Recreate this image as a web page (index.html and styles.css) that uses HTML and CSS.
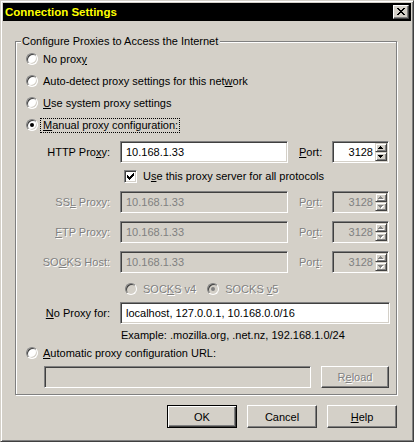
FILE: index.html
```html
<!DOCTYPE html>
<html lang="en">
<head>
<meta charset="utf-8">
<title>Connection Settings</title>
<link rel="stylesheet" href="styles.css">
</head>
<body>
<div class="window">
  <div class="caption">
    <span class="caption-title">Connection Settings</span>
    <span class="caption-close">
      <svg width="8" height="7" viewBox="0 0 8 7" shape-rendering="crispEdges">
        <path fill="#000" d="M0 0h2v1H0zM6 0h2v1H6zM1 1h2v1H1zM5 1h2v1H5zM2 2h4v1H2zM3 3h2v1H3zM2 4h4v1H2zM1 5h2v1H1zM5 5h2v1H5zM0 6h2v1H0zM6 6h2v1H6z"/>
      </svg>
    </span>
  </div>

  <div class="client">
    <div class="group">
      <div class="legend">Configure Proxies to Access the Internet</div>

      <div class="radio-row"><span class="radio"></span><span>No prox<u>y</u></span></div>
      <div class="radio-row"><span class="radio"></span><span>Auto-detect proxy settings for this net<u>w</u>ork</span></div>
      <div class="radio-row"><span class="radio"></span><span><u>U</u>se system proxy settings</span></div>
      <div class="radio-row"><span class="radio checked"></span><span class="focus"><u>M</u>anual proxy configuration:</span></div>

      <div class="field-row row-http">
        <span class="field-label">HTTP Pro<u>x</u>y:</span>
        <span class="field host">10.168.1.33</span>
        <span class="port-label"><u>P</u>ort:</span>
        <span class="field spin">
          <span class="spin-value">3128</span>
          <span class="spin-buttons">
            <span class="spin-btn"><svg width="5" height="3" viewBox="0 0 5 3" shape-rendering="crispEdges"><path d="M2 0h1v1H2zM1 1h3v1H1zM0 2h5v1H0z"/></svg></span>
            <span class="spin-btn"><svg width="5" height="3" viewBox="0 0 5 3" shape-rendering="crispEdges"><path d="M0 0h5v1H0zM1 1h3v1H1zM2 2h1v1H2z"/></svg></span>
          </span>
        </span>
      </div>

      <div class="check-row">
        <span class="checkbox">
          <svg width="7" height="7" viewBox="0 0 7 7" shape-rendering="crispEdges">
            <path fill="#000" d="M6 0h1v1H6zM5 1h2v1H5zM0 2h1v1H0zM4 2h3v1H4zM0 3h2v1H0zM3 3h3v1H3zM0 4h5v1H0zM1 5h3v1H1zM2 6h1v1H2z"/>
          </svg>
        </span>
        <span>U<u>s</u>e this proxy server for all protocols</span>
      </div>

      <div class="field-row row-ssl disabled">
        <span class="field-label">SS<u>L</u> Proxy:</span>
        <span class="field host">10.168.1.33</span>
        <span class="port-label">P<u>o</u>rt:</span>
        <span class="field spin">
          <span class="spin-value">3128</span>
          <span class="spin-buttons">
            <span class="spin-btn"><svg width="5" height="3" viewBox="0 0 5 3" shape-rendering="crispEdges"><path d="M2 0h1v1H2zM1 1h3v1H1zM0 2h5v1H0z"/></svg></span>
            <span class="spin-btn"><svg width="5" height="3" viewBox="0 0 5 3" shape-rendering="crispEdges"><path d="M0 0h5v1H0zM1 1h3v1H1zM2 2h1v1H2z"/></svg></span>
          </span>
        </span>
      </div>

      <div class="field-row row-next disabled">
        <span class="field-label"><u>F</u>TP Proxy:</span>
        <span class="field host">10.168.1.33</span>
        <span class="port-label">Po<u>r</u>t:</span>
        <span class="field spin">
          <span class="spin-value">3128</span>
          <span class="spin-buttons">
            <span class="spin-btn"><svg width="5" height="3" viewBox="0 0 5 3" shape-rendering="crispEdges"><path d="M2 0h1v1H2zM1 1h3v1H1zM0 2h5v1H0z"/></svg></span>
            <span class="spin-btn"><svg width="5" height="3" viewBox="0 0 5 3" shape-rendering="crispEdges"><path d="M0 0h5v1H0zM1 1h3v1H1zM2 2h1v1H2z"/></svg></span>
          </span>
        </span>
      </div>

      <div class="field-row row-next disabled">
        <span class="field-label">SO<u>C</u>KS Host:</span>
        <span class="field host">10.168.1.33</span>
        <span class="port-label">Por<u>t</u>:</span>
        <span class="field spin">
          <span class="spin-value">3128</span>
          <span class="spin-buttons">
            <span class="spin-btn"><svg width="5" height="3" viewBox="0 0 5 3" shape-rendering="crispEdges"><path d="M2 0h1v1H2zM1 1h3v1H1zM0 2h5v1H0z"/></svg></span>
            <span class="spin-btn"><svg width="5" height="3" viewBox="0 0 5 3" shape-rendering="crispEdges"><path d="M0 0h5v1H0zM1 1h3v1H1zM2 2h1v1H2z"/></svg></span>
          </span>
        </span>
      </div>

      <div class="socks-row disabled">
        <span class="radio"></span><span class="socks-text">SOC<u>K</u>S v4</span>
        <span class="radio checked socks-second"></span><span class="socks-text">SOCKS <u>v</u>5</span>
      </div>

      <div class="field-row row-noproxy">
        <span class="field-label"><u>N</u>o Proxy for:</span>
        <span class="field noproxy">localhost, 127.0.0.1, 10.168.0.0/16</span>
      </div>

      <div class="example">Example: .mozilla.org, .net.nz, 192.168.1.0/24</div>

      <div class="radio-row auto-row"><span class="radio"></span><span><u>A</u>utomatic proxy configuration URL:</span></div>

      <div class="url-row">
        <span class="field url disabled-field"></span>
        <span class="button reload"><span class="disabled-text">R<u>e</u>load</span></span>
      </div>
    </div>

    <div class="actions">
      <span class="button default">OK</span>
      <span class="button">Cancel</span>
      <span class="button"><u>H</u>elp</span>
    </div>
  </div>
</div>
</body>
</html>
```

FILE: styles.css
```css
/* Classic 3D dialog palette */
html, body {
  margin: 0;
  padding: 0;
  background: #d4d0c8;
}

body {
  font-family: "Liberation Sans", Arial, sans-serif;
  font-size: 11px;
  color: #000;
}

u {
  text-decoration: underline;
  text-underline-offset: 1px;
}

/* Window frame */
.window {
  width: 414px;
  height: 442px;
  box-sizing: border-box;
  border: 1px solid;
  border-color: #d4d0c8 #404040 #404040 #d4d0c8;
  box-shadow: inset 1px 1px 0 #fff, inset -1px -1px 0 #808080;
  padding: 2px;
  background: #d4d0c8;
  display: flex;
  flex-direction: column;
}

/* Title bar */
.caption {
  height: 18px;
  flex: none;
  background: #000;
  display: flex;
  align-items: center;
  padding: 0 2px 0 2px;
}

.caption-title {
  flex: 1;
  color: #ffff00;
  font-weight: bold;
  font-size: 11.5px;
  line-height: 18px;
}

.caption-close {
  width: 16px;
  height: 14px;
  box-sizing: border-box;
  border: 1px solid;
  border-color: #fff #404040 #404040 #fff;
  box-shadow: inset -1px -1px 0 #808080;
  background: #d4d0c8;
  display: flex;
  align-items: center;
  justify-content: center;
  padding: 0 1px 1px 0;
}

.caption-close svg,
.checkbox svg,
.spin-btn svg {
  display: block;
}

/* Client area */
.client {
  flex: 1;
  padding: 20px 14px 0 12px;
  display: flex;
  flex-direction: column;
}

/* Etched group box */
.group {
  height: 354px;
  flex: none;
  box-sizing: border-box;
  border: 1px solid #808080;
  box-shadow: 1px 1px 0 #fff, inset 1px 1px 0 #fff;
  display: flex;
  flex-direction: column;
}

.legend {
  align-self: flex-start;
  margin: -7px 0 0 5px;
  padding: 0 2px 0 1px;
  background: #d4d0c8;
  line-height: 13px;
  height: 13px;
}

/* Radio buttons */
.radio-row {
  height: 22px;
  display: flex;
  align-items: center;
  padding-left: 10px;
  gap: 5px;
  white-space: nowrap;
}

.radio {
  flex: none;
  position: relative;
  width: 12px;
  height: 12px;
  box-sizing: border-box;
  border-radius: 50%;
  border: 1px solid;
  border-color: #808080 #fff #fff #808080;
  box-shadow: inset 1px 1px 0 #404040, inset -1px -1px 0 #d4d0c8;
  background: #fff;
}

.radio.checked::after {
  content: "";
  position: absolute;
  left: 3px;
  top: 3px;
  width: 4px;
  height: 4px;
  border-radius: 50%;
  background: #000;
}

.focus {
  outline: 1px dotted #000;
  outline-offset: 0;
  padding: 0 1px 0 2px;
  margin-left: -2px;
  line-height: 13px;
}

/* Label + field rows */
.field-row {
  height: 22px;
  display: flex;
  align-items: center;
  white-space: nowrap;
}

.row-http { margin-top: 5px; }
.row-ssl { margin-top: 5px; }
.row-next { margin-top: 8px; }
.row-noproxy { margin-top: 3px; }

.field-label {
  width: 94px;
  margin-right: 10px;
  text-align: right;
}

.port-label {
  margin-left: 11px;
  width: 33px;
}

/* Sunken edit field */
.field {
  height: 22px;
  box-sizing: border-box;
  border: 1px solid;
  border-color: #808080 #fff #fff #808080;
  box-shadow: inset 1px 1px 0 #404040, inset -1px -1px 0 #d4d0c8;
  background: #fff;
  padding: 0 4px 0 5px;
  display: flex;
  align-items: center;
  white-space: nowrap;
  overflow: hidden;
}

.host { width: 168px; }
.noproxy { width: 270px; }

.url {
  width: 267px;
}

.disabled-field {
  background: #d4d0c8;
}

/* Up/down spin control */
.spin {
  width: 57px;
  padding: 1px;
  justify-content: flex-end;
}

.spin-value {
  margin-right: 2px;
}

.spin-buttons {
  display: flex;
  flex-direction: column;
  align-self: stretch;
}

.spin-btn {
  width: 12px;
  height: 9px;
  box-sizing: border-box;
  border: 1px solid;
  border-color: #d4d0c8 #404040 #404040 #d4d0c8;
  box-shadow: inset 1px 1px 0 #fff, inset -1px -1px 0 #808080;
  background: #d4d0c8;
  display: flex;
  align-items: center;
  justify-content: center;
  padding: 0 1px 0 0;
}

.spin-btn path {
  fill: #000;
}

/* Disabled state */
.disabled .field-label,
.disabled .port-label,
.disabled .socks-text,
.disabled-text {
  color: #808080;
  text-shadow: 1px 1px 0 #fff;
}

.disabled .field {
  background: #d4d0c8;
  color: #808080;
}

.disabled .spin-btn path {
  fill: #808080;
}

.disabled .spin-btn svg {
  filter: drop-shadow(1px 1px 0 #fff);
}

.disabled .radio {
  background: #d4d0c8;
}

.disabled .radio.checked::after {
  background: #808080;
}

/* Checkbox row */
.check-row {
  height: 20px;
  margin-top: 3px;
  padding-left: 108px;
  display: flex;
  align-items: center;
  gap: 6px;
  white-space: nowrap;
}

.checkbox {
  flex: none;
  width: 13px;
  height: 13px;
  box-sizing: border-box;
  border: 1px solid;
  border-color: #808080 #fff #fff #808080;
  box-shadow: inset 1px 1px 0 #404040, inset -1px -1px 0 #d4d0c8;
  background: #fff;
  padding: 2px;
}

/* SOCKS version choice */
.socks-row {
  height: 20px;
  margin-top: 6px;
  padding-left: 109px;
  display: flex;
  align-items: center;
  white-space: nowrap;
}

.socks-text {
  margin-left: 6px;
}

.socks-second {
  margin-left: 11px;
}

.example {
  margin-top: 4px;
  height: 14px;
  line-height: 14px;
  padding-left: 105px;
  white-space: nowrap;
}

.auto-row {
  height: 20px;
  margin-top: 1px;
}

.url-row {
  margin-top: 3px;
  height: 22px;
  padding-left: 28px;
  display: flex;
  align-items: center;
}

/* Push buttons */
.button {
  width: 70px;
  height: 23px;
  box-sizing: border-box;
  border: 1px solid;
  border-color: #fff #404040 #404040 #fff;
  box-shadow: inset -1px -1px 0 #808080;
  background: #d4d0c8;
  display: flex;
  align-items: center;
  justify-content: center;
  white-space: nowrap;
}

.button.default {
  border-color: #000;
  box-shadow: inset 1px 1px 0 #fff, inset -1px -1px 0 #404040, inset -2px -2px 0 #808080;
}

.reload {
  width: 68px;
  height: 22px;
  margin-left: 10px;
}

.actions {
  margin-top: 10px;
  display: flex;
  justify-content: flex-end;
  gap: 10px;
}
```
